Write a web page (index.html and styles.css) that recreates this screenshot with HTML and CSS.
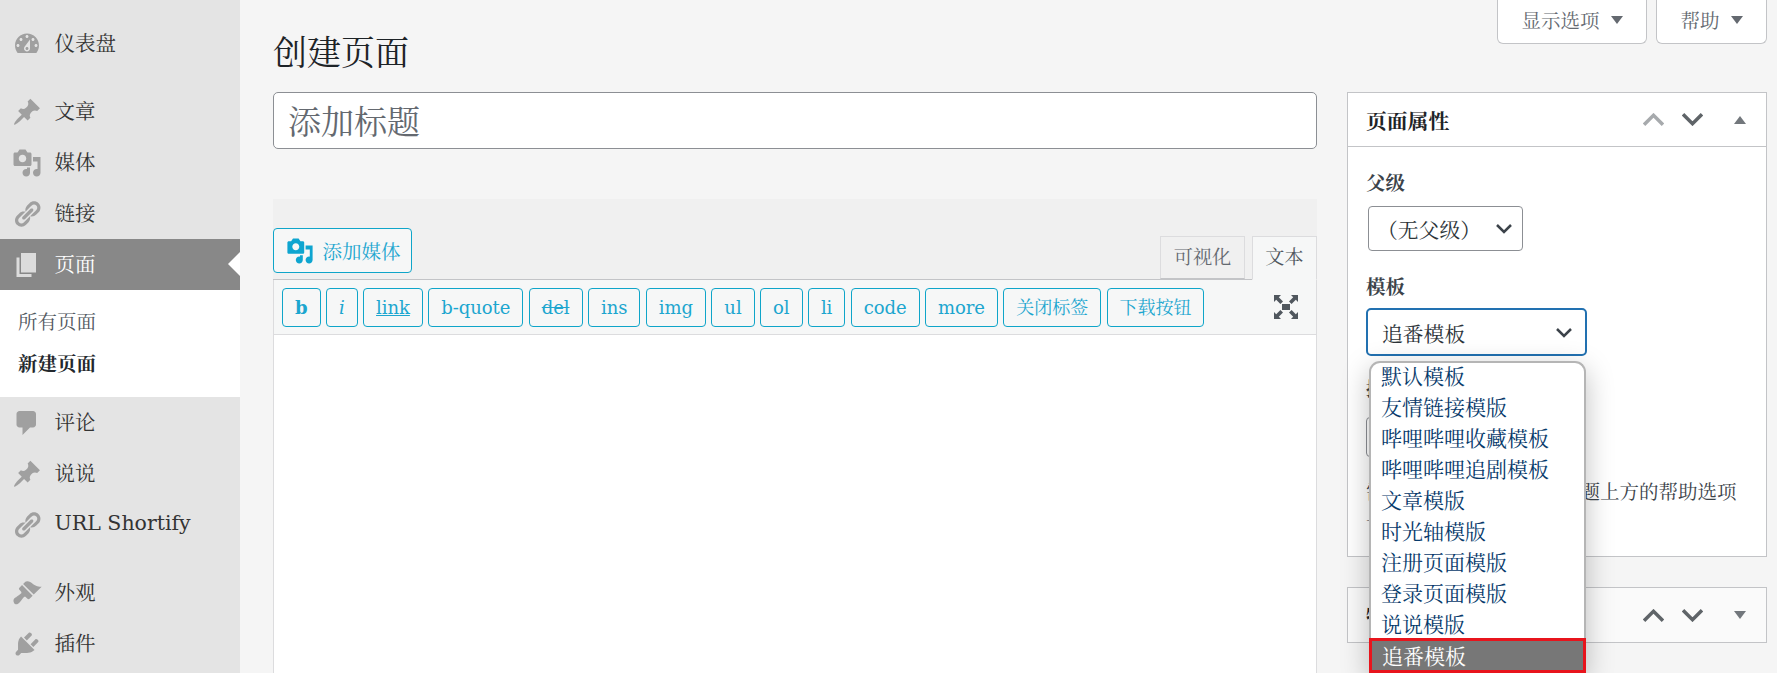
FILE: index.html
```html
<!DOCTYPE html>
<html lang="zh-CN">
<head>
<meta charset="utf-8">
<title>创建页面</title>
<link rel="stylesheet" href="styles.css">
</head>
<body>
<div class="app">
  <nav class="side">
    <ul class="menu first">
      <li class="item"><svg class="ic" viewBox="0 0 20 20"><path d="M3.76 16h12.48c1.1-1.37 1.76-3.11 1.76-5 0-4.42-3.58-8-8-8s-8 3.58-8 8c0 1.89.66 3.63 1.76 5zM10 4c.55 0 1 .45 1 1s-.45 1-1 1-1-.45-1-1 .45-1 1-1zM6 6c.55 0 1 .45 1 1s-.45 1-1 1-1-.45-1-1 .45-1 1-1zm8 0c.55 0 1 .45 1 1s-.45 1-1 1-1-.45-1-1 .45-1 1-1zm-5.37 5.55L12 7v6c0 1.1-.9 2-2 2s-2-.9-2-2c0-.57.24-1.08.63-1.45zM4 10c.55 0 1 .45 1 1s-.45 1-1 1-1-.45-1-1 .45-1 1-1zm12 0c.55 0 1 .45 1 1s-.45 1-1 1-1-.45-1-1 .45-1 1-1zm-5 3c0-.55-.45-1-1-1s-1 .45-1 1 .45 1 1 1 1-.45 1-1z"/></svg>仪表盘</li>
    </ul>
    <ul class="menu">
      <li class="item"><svg class="ic" viewBox="0 0 20 20"><path d="M10.44 3.02l1.82-1.82 6.36 6.35-1.83 1.82c-1.05-.68-2.48-.57-3.41.36l-.75.75c-.92.93-1.04 2.35-.35 3.41l-1.83 1.82-2.41-2.41-2.8 2.79c-.42.42-3.38 2.71-3.8 2.29s1.86-3.39 2.28-3.81l2.79-2.79L4.1 9.36l1.83-1.82c1.05.69 2.48.57 3.4-.36l.75-.75c.93-.92 1.05-2.35.36-3.41z"/></svg>文章</li>
      <li class="item"><svg class="ic" viewBox="0 0 20 20"><path d="M13 11V4c0-.55-.45-1-1-1h-1.67L9 1H5L3.67 3H2c-.55 0-1 .45-1 1v7c0 .55.45 1 1 1h10c.55 0 1-.45 1-1zM7 4.5c1.38 0 2.5 1.12 2.5 2.5S8.38 9.5 7 9.5 4.5 8.38 4.5 7 5.62 4.5 7 4.5zM14 6h5v10.5c0 1.38-1.12 2.5-2.5 2.5S14 17.88 14 16.5s1.12-2.5 2.5-2.5c.17 0 .34.02.5.05V9h-3V6zm-4 8.05V13h2v3.5c0 1.38-1.12 2.5-2.5 2.5S7 17.88 7 16.5 8.12 14 9.5 14c.17 0 .34.02.5.05z"/></svg>媒体</li>
      <li class="item"><svg class="ic" viewBox="0 0 20 20"><path d="M17.74 2.76c1.68 1.69 1.68 4.41 0 6.1l-1.53 1.52c-1.12 1.12-2.7 1.47-4.14 1.09l2.62-2.61.76-.77.76-.76c.84-.84.84-2.2 0-3.04-.84-.85-2.2-.85-3.04 0l-.77.76-3.38 3.38c-.37-1.44-.02-3.02 1.1-4.14l1.52-1.53c1.69-1.68 4.42-1.68 6.1 0zM8.59 13.43l5.34-5.34c.42-.42.42-1.1 0-1.52-.44-.43-1.13-.39-1.53 0l-5.33 5.34c-.42.42-.42 1.1 0 1.52.44.43 1.13.39 1.52 0zm-.76 2.29l4.14-4.15c.38 1.44.03 3.02-1.09 4.14l-1.52 1.53c-1.69 1.68-4.41 1.68-6.1 0-1.68-1.68-1.68-4.42 0-6.1l1.53-1.52c1.12-1.12 2.7-1.47 4.14-1.1l-4.14 4.15c-.85.84-.85 2.2 0 3.05.84.84 2.2.84 3.04 0z"/></svg>链接</li>
      <li class="item current"><svg class="ic" viewBox="0 0 20 20"><path d="M6 15V2h10v13H6zm-1 1h8v2H3V5h2v11z"/></svg>页面</li>
      <li class="sub">
        <div class="subitem">所有页面</div>
        <div class="subitem strong">新建页面</div>
      </li>
      <li class="item"><svg class="ic" viewBox="0 0 20 20"><path d="M5 2h9c1.1 0 2 .9 2 2v7c0 1.1-.9 2-2 2h-2l-5 5v-5H5c-1.1 0-2-.9-2-2V4c0-1.1.9-2 2-2z"/></svg>评论</li>
      <li class="item"><svg class="ic" viewBox="0 0 20 20"><path d="M10.44 3.02l1.82-1.82 6.36 6.35-1.83 1.82c-1.05-.68-2.48-.57-3.41.36l-.75.75c-.92.93-1.04 2.35-.35 3.41l-1.83 1.82-2.41-2.41-2.8 2.79c-.42.42-3.38 2.71-3.8 2.29s1.86-3.39 2.28-3.81l2.79-2.79L4.1 9.36l1.83-1.82c1.05.69 2.48.57 3.4-.36l.75-.75c.93-.92 1.05-2.35.36-3.41z"/></svg>说说</li>
      <li class="item"><svg class="ic" viewBox="0 0 20 20"><path d="M17.74 2.76c1.68 1.69 1.68 4.41 0 6.1l-1.53 1.52c-1.12 1.12-2.7 1.47-4.14 1.09l2.62-2.61.76-.77.76-.76c.84-.84.84-2.2 0-3.04-.84-.85-2.2-.85-3.04 0l-.77.76-3.38 3.38c-.37-1.44-.02-3.02 1.1-4.14l1.52-1.53c1.69-1.68 4.42-1.68 6.1 0zM8.59 13.43l5.34-5.34c.42-.42.42-1.1 0-1.52-.44-.43-1.13-.39-1.53 0l-5.33 5.34c-.42.42-.42 1.1 0 1.52.44.43 1.13.39 1.52 0zm-.76 2.29l4.14-4.15c.38 1.44.03 3.02-1.09 4.14l-1.52 1.53c-1.69 1.68-4.41 1.68-6.1 0-1.68-1.68-1.68-4.42 0-6.1l1.53-1.52c1.12-1.12 2.7-1.47 4.14-1.1l-4.14 4.15c-.85.84-.85 2.2 0 3.05.84.84 2.2.84 3.04 0z"/></svg>URL Shortify</li>
    </ul>
    <ul class="menu">
      <li class="item"><svg class="ic" viewBox="0 0 20 20"><path d="M14.48 11.06L7.41 3.99l1.5-1.5c.5-.56 2.3-.47 3.51.32 1.21.8 1.43 1.28 2.91 2.1 1.18.64 2.45 1.26 4.45.85zm-.71.71L6.7 4.7 4.93 6.47c-.39.39-.39 1.02 0 1.41l1.06 1.06c.39.39.39 1.03 0 1.42-.6.6-1.43 1.11-2.21 1.69-.35.26-.7.53-1.01.84C1.43 13.23.4 14.81 1.4 16.6c1 1.79 2.57.76 3.91-.59.31-.31.58-.66.84-1.01.58-.78 1.09-1.61 1.69-2.21.39-.39 1.02-.39 1.41 0l1.06 1.06c.39.39 1.02.39 1.41 0z"/></svg>外观</li>
      <li class="item"><svg class="ic" viewBox="0 0 20 20"><path d="M13.11 4.36L9.87 7.6 8 5.73l3.24-3.24c.35-.34 1.05-.2 1.56.32.52.51.66 1.21.31 1.55zm-8 1.77l.91-1.12 9.01 9.01-1.19.84c-.71.71-2.63 1.16-3.82 1.16H6.14L4.9 17.26c-.59.59-1.54.59-2.12 0-.59-.58-.59-1.53 0-2.12l1.24-1.24v-3.88c0-1.13.4-3.19 1.09-3.89zm7.26 3.97l3.24-3.24c.34-.35 1.04-.21 1.55.31.52.51.66 1.21.31 1.55l-3.24 3.25z"/></svg>插件</li>
    </ul>
  </nav>

  <main class="main">
    <div class="screen-tabs">
      <div class="screen-tab">显示选项<i class="tri-down"></i></div>
      <div class="screen-tab help">帮助<i class="tri-down"></i></div>
    </div>
    <h1 class="page-title">创建页面</h1>
    <div class="columns">
      <section class="left">
        <div class="title-input">添加标题</div>
        <div class="editor">
          <div class="editor-head">
            <div class="media-btn"><svg class="media-ic" viewBox="0 0 20 20"><path d="M13 11V4c0-.55-.45-1-1-1h-1.67L9 1H5L3.67 3H2c-.55 0-1 .45-1 1v7c0 .55.45 1 1 1h10c.55 0 1-.45 1-1zM7 4.5c1.38 0 2.5 1.12 2.5 2.5S8.38 9.5 7 9.5 4.5 8.38 4.5 7 5.62 4.5 7 4.5zM14 6h5v10.5c0 1.38-1.12 2.5-2.5 2.5S14 17.88 14 16.5s1.12-2.5 2.5-2.5c.17 0 .34.02.5.05V9h-3V6zm-4 8.05V13h2v3.5c0 1.38-1.12 2.5-2.5 2.5S7 17.88 7 16.5 8.12 14 9.5 14c.17 0 .34.02.5.05z"/></svg>添加媒体</div>
            <div class="tabs">
              <div class="tab">可视化</div>
              <div class="tab active">文本</div>
            </div>
          </div>
          <div class="toolbar">
            <div class="tool bold">b</div>
            <div class="tool ital">i</div>
            <div class="tool und">link</div>
            <div class="tool">b-quote</div>
            <div class="tool strike">del</div>
            <div class="tool">ins</div>
            <div class="tool">img</div>
            <div class="tool">ul</div>
            <div class="tool">ol</div>
            <div class="tool">li</div>
            <div class="tool">code</div>
            <div class="tool">more</div>
            <div class="tool">关闭标签</div>
            <div class="tool">下载按钮</div>
            <svg class="expand" viewBox="0 0 24 24"><path d="M8 9h8v6H8zM0 0h7L4.8 2.2 9 6.4 6.4 9 2.2 4.800 0 7zM24 0v7l-2.200-2.200L17.600 9 15 6.400l4.200-4.200L17 0zM0 24v-7l2.200 2.200L6.400 15 9 17.600l-4.200 4.200L7 24zM24 24h-7l2.200-2.200L15 17.600l2.600-2.600 4.200 4.200L24 17z"/></svg>
          </div>
          <div class="editor-body"></div>
        </div>
      </section>

      <aside class="right">
        <div class="box">
          <div class="box-head">
            <h2 class="box-title">页面属性</h2>
            <div class="box-ctrls">
              <svg class="chev faint" viewBox="0 0 20 12"><path d="M1 11l9-9 9 9"/></svg>
              <svg class="chev" viewBox="0 0 20 12"><path d="M1 1l9 9 9-9"/></svg>
              <i class="tri-up"></i>
            </div>
          </div>
          <div class="box-body">
            <div class="label">父级</div>
            <div class="select parent">（无父级）<svg class="sel-chev" viewBox="0 0 16 10"><path d="M1 1l7 7 7-7"/></svg></div>
            <div class="label">模板</div>
            <div class="select tpl">追番模板<svg class="sel-chev" viewBox="0 0 16 10"><path d="M1 1l7 7 7-7"/></svg></div>
            <ul class="dropdown">
              <li>默认模板</li>
              <li>友情链接模版</li>
              <li>哔哩哔哩收藏模板</li>
              <li>哔哩哔哩追剧模板</li>
              <li>文章模版</li>
              <li>时光轴模版</li>
              <li>注册页面模版</li>
              <li>登录页面模版</li>
              <li>说说模版</li>
              <li class="picked">追番模板</li>
            </ul>
            <div class="label order">排序</div>
            <div class="order-input"></div>
            <p class="hint">需要帮助？请使用页面标题上方的帮助选项卡。</p>
          </div>
        </div>
        <div class="box second">
          <div class="box-head closed">
            <h2 class="box-title">特色图片</h2>
            <div class="box-ctrls">
              <svg class="chev" viewBox="0 0 20 12"><path d="M1 11l9-9 9 9"/></svg>
              <svg class="chev" viewBox="0 0 20 12"><path d="M1 1l9 9 9-9"/></svg>
              <i class="tri-down box-tri"></i>
            </div>
          </div>
        </div>
      </aside>
    </div>
  </main>
</div>
</body>
</html>
```
FILE: styles.css
```css
* { box-sizing: border-box; }
html, body { margin: 0; height: 673px; overflow: hidden; }
body {
  font-family: "DejaVu Serif", "Noto Serif CJK SC", "Noto Sans CJK SC", serif;
  font-size: 19.5px;
  color: #3c434a;
  background: #f5f5f5;
}
ul { list-style: none; margin: 0; padding: 0; }
.app { display: flex; height: 673px; overflow: hidden; }

.side { width: 240px; flex: none; background: #e4e4e4; padding-top: 18px; }
.menu { margin-bottom: 17px; }
.item {
  position: relative;
  display: flex;
  align-items: center;
  height: 51px;
  padding: 0 0 3px 12px;
  font-size: 20.5px;
  color: #333;
}
.ic { width: 30px; height: 30px; fill: #a0a0a0; margin: 3px 12.500px 0 0; flex: none; }
.current { background: #888; color: #fff; }
.current .ic { fill: #dcdcdc; }
.current::after {
  content: "";
  position: absolute;
  right: 0;
  top: 13px;
  border: 12px solid transparent;
  border-left: 0;
  border-right-color: #fff;
}
.sub { background: #fff; height: 107px; padding: 12px 0 0 18px; }
.subitem { height: 42px; line-height: 42px; color: #50575e; }
.strong { font-weight: 700; color: #23282d; }

.main { flex: 1; min-width: 0; padding: 0 10px 0 33px; position: relative; }
.screen-tabs { display: flex; justify-content: flex-end; gap: 9px; height: 44px; margin-bottom: -44px; }
.screen-tab {
  display: flex;
  align-items: center;
  justify-content: center;
  width: 150px;
  padding-bottom: 4px;
  background: #fff;
  border: 1px solid #c3c4c7;
  border-top: 0;
  border-radius: 0 0 6px 6px;
  color: #646970;
}
.help { width: 111px; }
.tri-down { border: 6px solid transparent; border-top: 8px solid #646970; border-bottom: 0; margin-left: 11px; }
.tri-up { border: 6px solid transparent; border-bottom: 8px solid #72777c; border-top: 0; }
.page-title { margin: 0; padding-top: 31px; height: 92px; font-size: 34px; font-weight: 400; line-height: 44px; color: #1d2327; }

.columns { display: grid; grid-template-columns: 1044px 420px; column-gap: 30px; }
.title-input {
  height: 57px;
  padding: 2px 0 0 14px;
  line-height: 55px;
  font-size: 33px;
  color: #646970;
  background: #fff;
  border: 1px solid #8c8f94;
  border-radius: 5px;
}
.editor { margin-top: 50px; }
.editor-head { display: flex; justify-content: space-between; align-items: flex-end; height: 81px; background: #f0f0f0; border-bottom: 1px solid #c3c4c7; }
.media-btn {
  display: flex;
  align-items: center;
  height: 45px;
  width: 139px;
  margin-bottom: 6px;
  padding-left: 12px;
  color: #1ca6cf;
  background: #f6f7f7;
  border: 1px solid #0fa5c9;
  border-radius: 4px;
}
.media-ic { width: 28px; height: 28px; fill: #0ea5d0; margin-right: 8.500px; flex: none; }
.tabs { display: flex; gap: 7px; margin-bottom: -1px; }
.tab {
  width: 85px;
  height: 43px;
  line-height: 42px;
  text-align: center;
  font-size: 19.2px;
  color: #646970;
  background: #f0f0f0;
  border: 1px solid #dcdcde;
  border-bottom: 1px solid #c3c4c7;
}
.tab.active { width: 65px; height: 44px; color: #50575e; background: #f6f7f7; border-bottom-color: #f6f7f7; }
.toolbar {
  display: flex;
  align-items: center;
  gap: 5.400px;
  height: 55px;
  padding: 0 0 0 8px;
  background: #f6f7f7;
  border: 1px solid #dcdcde;
  border-top: 0;
  border-bottom-color: #dcdcde;
}
.tool {
  height: 39px;
  line-height: 37px;
  padding: 0 12px;
  font-size: 18px;
  letter-spacing: -.05px;
  color: #1ca6cf;
  background: #f6f7f7;
  border: 1px solid #0fa5c9;
  border-radius: 4px;
}
.bold { font-weight: 700; }
.ital { font-style: italic; }
.und { text-decoration: underline; }
.strike { text-decoration: line-through; }
.expand { width: 24px; height: 24px; fill: #50575e; margin-left: auto; margin-right: 18px; }
.editor-body { height: 400px; background: #fff; border: 1px solid #dcdcde; border-top: 0; }

.box { background: #fff; border: 1px solid #c3c4c7; }
.second { margin-top: 30px; background: #fafafa; }
.box-head { display: flex; align-items: center; justify-content: space-between; height: 54px; padding: 0 20px 0 18px; border-bottom: 1px solid #c3c4c7; }
.closed { border-bottom: 0; }
.box-title { margin: 0; font-size: 20.800px; font-weight: 700; color: #1d2327; }
.box-ctrls { display: flex; align-items: center; gap: 18px; }
.chev { width: 21px; height: 13px; fill: none; stroke: #5f6468; stroke-width: 3.300; }
.chev.faint { stroke: #a7aaad; }
.tri-up, .box-tri { margin-left: 13px; }
.box-tri { border-top-color: #72777c; }
.box-body { position: relative; height: 409px; padding: 21px 18px 0; }
.label { height: 32px; line-height: 32px; font-weight: 700; color: #3c434a; }
.select {
  display: flex;
  align-items: center;
  justify-content: space-between;
  background: #fff;
  color: #2c3338;
  font-size: 20.800px;
}
.parent { width: 155px; height: 45px; margin: 6px 0 21px 2px; padding: 0 10px 0 8px; border: 1px solid #8c8f94; border-radius: 4px; }
.tpl { width: 221px; height: 48px; margin: 4px 0 0 0; padding: 1px 13px 0 14px; border: 2px solid #2271b1; border-radius: 5px; color: #2c3338; }
.sel-chev { width: 16px; height: 10px; fill: none; stroke: #3c434a; stroke-width: 2.500; flex: none; }
.dropdown {
  position: absolute;
  left: 21px;
  top: 214px;
  z-index: 3;
  width: 217px;
  background: #fff;
  border: 2px solid #b5b5b5;
  border-bottom: 0;
  border-radius: 11px 11px 0 0;
  box-shadow: 0 8px 28px rgba(0,0,0,.25);
}
.dropdown li { height: 31px; line-height: 31px; padding-left: 10px; font-size: 21px; color: #073a6b; white-space: nowrap; }
.dropdown li:first-child { margin-top: -1.500px; }
.dropdown .picked {
  height: 35px;
  margin: -3px -2px 0;
  padding-left: 10px;
  line-height: 32px;
  color: #fff;
  background: #777;
  border: 3px solid #e8141c;
}
.order { margin-top: 18px; }
.order-input { width: 80px; height: 40px; margin-top: 11px; border: 1px solid #8c8f94; border-radius: 4px; }
.hint { margin: 21px 0 0; line-height: 30px; color: #3c434a; }
```
